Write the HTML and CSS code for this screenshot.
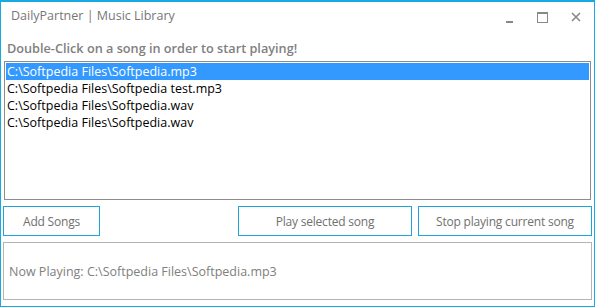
FILE: index.html
```html
<!DOCTYPE html>
<html lang="en">
<head>
    <meta charset="UTF-8">
    <title>DailyPartner | Music Library</title>
    <link rel="stylesheet" href="styles.css">
</head>
<body>
    <div class="window">
        <div class="titlebar">
            <div class="title">DailyPartner | Music Library</div>
            <div class="window-controls">
                <span class="ctrl ctrl-min"><svg width="10" height="10" viewBox="0 0 10 10"><rect x="1" y="7" width="7" height="2" fill="#888"/></svg></span>
                <span class="ctrl ctrl-max"><svg width="11" height="11" viewBox="0 0 11 11"><rect x="0.5" y="0.5" width="10" height="10" fill="none" stroke="#888"/><rect x="0.5" y="0.5" width="10" height="1.5" fill="#888"/></svg></span>
                <span class="ctrl ctrl-close"><svg width="10" height="10" viewBox="0 0 10 10"><path d="M1 1 L9 9 M9 1 L1 9" stroke="#888" stroke-width="1.6"/></svg></span>
            </div>
        </div>

        <div class="hint">Double-Click on a song in order to start playing!</div>

        <div class="song-list">
            <div class="song selected">C:\Softpedia Files\Softpedia.mp3</div>
            <div class="song">C:\Softpedia Files\Softpedia test.mp3</div>
            <div class="song">C:\Softpedia Files\Softpedia.wav</div>
            <div class="song">C:\Softpedia Files\Softpedia.wav</div>
        </div>

        <div class="controls">
            <button class="btn btn-add">Add Songs</button>
            <div class="spacer"></div>
            <button class="btn btn-play">Play selected song</button>
            <button class="btn btn-stop">Stop playing current song</button>
        </div>

        <div class="now-playing">Now Playing: C:\Softpedia Files\Softpedia.mp3</div>
    </div>
</body>
</html>
```

FILE: styles.css
```css
* {
    box-sizing: border-box;
}

html, body {
    margin: 0;
    padding: 0;
    background: #ffffff;
}

body {
    font-family: "Open Sans", "Noto Sans", sans-serif;
    font-size: 12px;
}

.window {
    width: 595px;
    height: 307px;
    border: 1px solid #17a9e1;
    border-top-width: 2px;
    display: flex;
    flex-direction: column;
    padding: 0 2px 0 2px;
}

.titlebar {
    height: 34px;
    display: flex;
    align-items: flex-start;
    justify-content: space-between;
}

.title {
    padding: 5px 0 0 8px;
    font-size: 12.5px;
    color: #777;
}

.window-controls {
    display: flex;
    padding-top: 10px;
}

.ctrl {
    width: 33px;
    height: 12px;
    display: flex;
    justify-content: center;
}

.ctrl-min {
    padding-top: 2px;
}

.hint {
    padding: 3px 0 0 4px;
    height: 25px;
    font-weight: 600;
    font-size: 12.7px;
    color: #808080;
}

.song-list {
    margin: 0 1px 0 1px;
    height: 139px;
    border: 1px solid #8c8c8c;
    padding: 1px;
}

.song {
    height: 17px;
    line-height: 17px;
    padding-left: 1px;
    font-size: 12.5px;
    color: #000;
}

.song.selected {
    background: #3399ff;
    color: #fff;
}

.controls {
    display: flex;
    margin-top: 6px;
    height: 30px;
    gap: 6px;
}

.spacer {
    flex: 1;
}

.btn {
    height: 30px;
    border: 1px solid #1fa4d8;
    background: #fff;
    color: #707070;
    font-family: inherit;
    font-size: 12px;
    letter-spacing: -0.2px;
    padding: 0;
}

.btn-add {
    width: 97px;
}

.btn-play {
    width: 174px;
}

.btn-stop {
    width: 174px;
}

.now-playing {
    margin-top: 6px;
    height: 58px;
    border: 1px solid #b4b4b4;
    display: flex;
    align-items: center;
    padding-left: 5px;
    font-size: 12.5px;
    color: #808080;
}
```
